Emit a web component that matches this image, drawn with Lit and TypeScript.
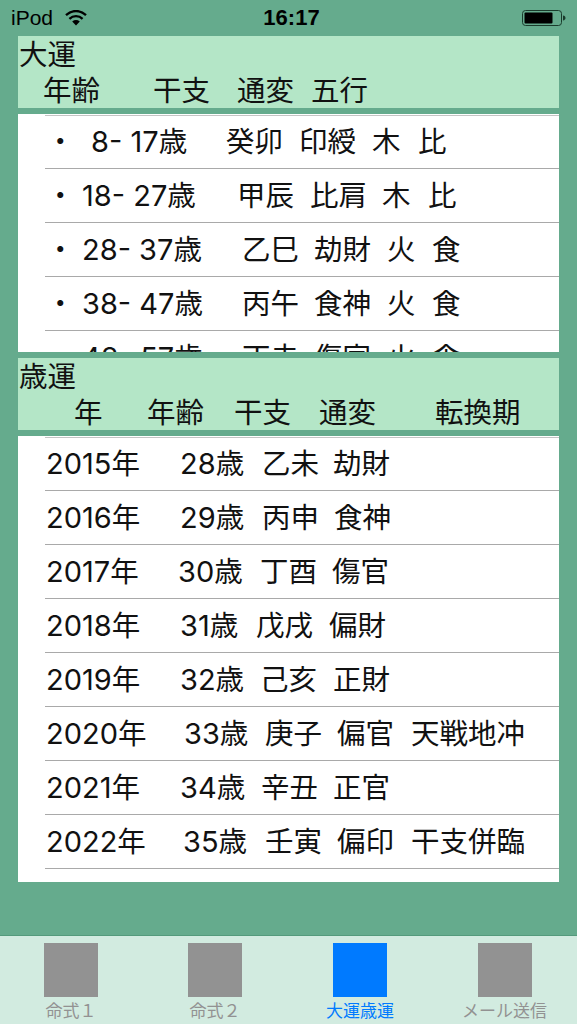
import { LitElement, html, css, svg } from "lit";
import { customElement } from "lit/decorators.js";

type Cell = [number, string];

const LIST_LEFT = 45;
const luck: Cell[][] = [
  [[46, "・"], [91, "8- 17歳"], [226, "癸卯"], [299, "印綬"], [372, "木"], [418, "比"]],
  [[46, "・"], [82, "18- 27歳"], [237, "甲辰"], [310, "比肩"], [382, "木"], [428, "比"]],
  [[46, "・"], [82, "28- 37歳"], [242, "乙巳"], [314, "劫財"], [387, "火"], [432, "食"]],
  [[46, "・"], [82, "38- 47歳"], [242, "丙午"], [314, "食神"], [387, "火"], [432, "食"]],
  [[46, "・"], [82, "48- 57歳"], [242, "丁未"], [314, "傷官"], [387, "火"], [432, "食"]],
];
const years: Cell[][] = [
  [[46, "2015年"], [180, "28歳"], [262, "乙未"], [333, "劫財"]],
  [[46, "2016年"], [180, "29歳"], [262, "丙申"], [334, "食神"]],
  [[46, "2017年"], [178, "30歳"], [260, "丁酉"], [332, "傷官"]],
  [[46, "2018年"], [180, "31歳"], [256, "戊戌"], [329, "偏財"]],
  [[46, "2019年"], [180, "32歳"], [260, "己亥"], [333, "正財"]],
  [[46, "2020年"], [184, "33歳"], [265, "庚子"], [337, "偏官"], [411, "天戦地冲"]],
  [[46, "2021年"], [180, "34歳"], [261, "辛丑"], [333, "正官"]],
  [[46, "2022年"], [183, "35歳"], [265, "壬寅"], [337, "偏印"], [411, "干支併臨"]],
];
const head1: Cell[] = [[43, "年齢"], [153, "干支"], [237, "通変"], [311, "五行"]];
const head2: Cell[] = [[74, "年"], [147, "年齢"], [234, "干支"], [319, "通変"], [435, "転換期"]];
const tabs = [
  { label: "命式１", active: false },
  { label: "命式２", active: false },
  { label: "大運歳運", active: true },
  { label: "メール送信", active: false },
];

/* Split a label into Latin runs and CJK runs: the CJK runs are set a little smaller. */
const runs = (text: string) =>
  text
    .split(/([^\x00-\x7f]+)/)
    .filter(Boolean)
    .map((part) => (/[^\x00-\x7f]/.test(part) ? html`<span class="cjk">${part}</span>` : part));

const cells = (row: Cell[], origin: number) =>
  row.map(([x, text], i) => {
    const ml = i === 0 ? x - origin : 0;
    const w = i + 1 < row.length ? `width:${row[i + 1][0] - x}px` : "";
    return html`<span class="cell" style="margin-left:${ml}px;${w}">${runs(text)}</span>`;
  });

const wifi = svg`<svg width="22" height="16" viewBox="0 0 22 16" aria-hidden="true">
  <path d="M1 5.2C6.8 -0.4 15.2 -0.4 21 5.2" fill="none" stroke="#000" stroke-width="2.3"/>
  <path d="M4.4 8.8C8.2 5.3 13.8 5.3 17.6 8.8" fill="none" stroke="#000" stroke-width="2.3"/>
  <path d="M7.2 11.4C9.6 9.6 12.4 9.6 14.8 11.4L11 15.4Z" fill="#000"/>
</svg>`;

const battery = svg`<svg width="44" height="18" viewBox="0 0 44 18" aria-hidden="true">
  <rect x="0.5" y="1.5" width="39" height="15" rx="3" fill="none" stroke="#1a3b2c" stroke-width="1"/>
  <rect x="2.5" y="3.5" width="28" height="11" rx="1" fill="#000"/>
  <path d="M41 6.5c1.6.3 2.5 1.2 2.5 2.5s-.9 2.2-2.5 2.5z" fill="#1a3b2c"/>
</svg>`;

@customElement("app-root")
export class AppRoot extends LitElement {
  static styles = css`
    :host {
      display: flex;
      flex-direction: column;
      width: 577px;
      height: 1024px;
      overflow: hidden;
      background: #65ab8d;
      color: #111;
      font-family: "Liberation Sans", "Noto Sans CJK JP", sans-serif;
      font-size: 30px;
    }
    .cjk { font-size: 28.5px; font-family: "Noto Sans CJK JP", sans-serif; }
    .status {
      flex: none;
      height: 36px;
      display: grid;
      grid-template-columns: 1fr auto 1fr;
      align-items: center;
      padding: 0 11px;
      font-size: 21px;
      color: #000;
    }
    .status-left { display: flex; align-items: center; gap: 12px; }
    .time { font-size: 22px; font-weight: 700; padding-left: 6px; }
    .status-right { display: flex; justify-content: flex-end; }
    main {
      flex: 1;
      min-height: 0;
      padding: 0 18px;
      display: flex;
      flex-direction: column;
      gap: 6px;
    }
    .head {
      flex: none;
      height: 72px;
      background: #b4e6c7;
      line-height: 36px;
    }
    .title { height: 35px; line-height: 34px; padding-left: 1px; }
    .cols { display: flex; height: 36px; white-space: nowrap; }
    .cell { flex: none; white-space: pre; }
    .list {
      flex: none;
      background: #fff;
      overflow: hidden;
      padding-left: 27px;
      font-family: Inter, "Noto Sans CJK JP", sans-serif;
      font-size: 29px;
    }
    .list.luck { height: 238px; }
    .list.years { height: 446px; }
    .row {
      display: flex;
      height: 54px;
      box-sizing: border-box;
      align-items: center;
      padding-bottom: 5px;
      border-bottom: 1px solid #a9a9a9;
      white-space: nowrap;
    }
    .rule { height: 2px; border-bottom: 1px solid #c4c4c4; box-sizing: border-box; }
    .row.first { height: 53px; }
    nav {
      flex: none;
      height: 89px;
      box-sizing: border-box;
      border-top: 1px solid #549a7c;
      background: #d2ebe0;
      display: grid;
      grid-template-columns: 142px 146px 144px 145px;
    }
    .tab {
      display: flex;
      flex-direction: column;
      align-items: center;
      padding-top: 7px;
      color: #929292;
      font-size: 17px;
      line-height: 29px;
    }
    .tab .icon { width: 54px; height: 54px; background: #929292; }
    .tab.active { color: #007aff; }
    .tab.active .icon { background: #007aff; }
  `;

  private renderRows(rows: Cell[][]) {
    return rows.map(
      (r, i) => html`<div class="row ${i === 0 ? "first" : ""}">${cells(r, LIST_LEFT)}</div>`
    );
  }

  render() {
    return html`
      <div class="status">
        <div class="status-left"><span>iPod</span>${wifi}</div>
        <div class="time">16:17</div>
        <div class="status-right">${battery}</div>
      </div>
      <main>
        <section class="head">
          <div class="title">${runs("大運")}</div>
          <div class="cols">${cells(head1, 18)}</div>
        </section>
        <section class="list luck"><div class="rule"></div>${this.renderRows(luck)}</section>
        <section class="head">
          <div class="title">${runs("歳運")}</div>
          <div class="cols">${cells(head2, 18)}</div>
        </section>
        <section class="list years"><div class="rule"></div>${this.renderRows(years)}</section>
      </main>
      <nav>
        ${tabs.map(
          (t) => html`<div class="tab ${t.active ? "active" : ""}"><div class="icon"></div><span>${t.label}</span></div>`
        )}
      </nav>
    `;
  }
}
